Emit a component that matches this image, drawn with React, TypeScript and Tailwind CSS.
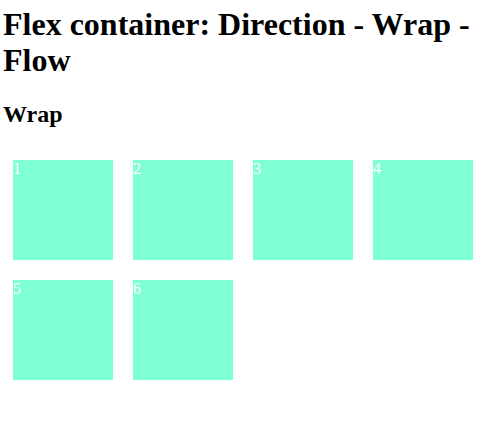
const items = [1, 2, 3, 4, 5, 6];

export default function App() {
  return (
    <div className="min-h-[424px] bg-white pl-[3px] pt-[6px] font-['Liberation_Serif',serif] text-black">
      <h1 className="text-[32px] font-bold leading-[36px]">
        Flex container: Direction - Wrap - Flow
      </h1>
      <h2 className="mt-[22px] text-[24px] font-bold leading-[28px]">Wrap</h2>
      <div className="mt-[22px] flex w-[480px] flex-wrap">
        {items.map((n) => (
          <div
            key={n}
            className="m-[10px] h-[100px] w-[100px] bg-[#7fffd4] text-[16px] leading-[18px] text-white"
          >
            {n}
          </div>
        ))}
      </div>
    </div>
  );
}
